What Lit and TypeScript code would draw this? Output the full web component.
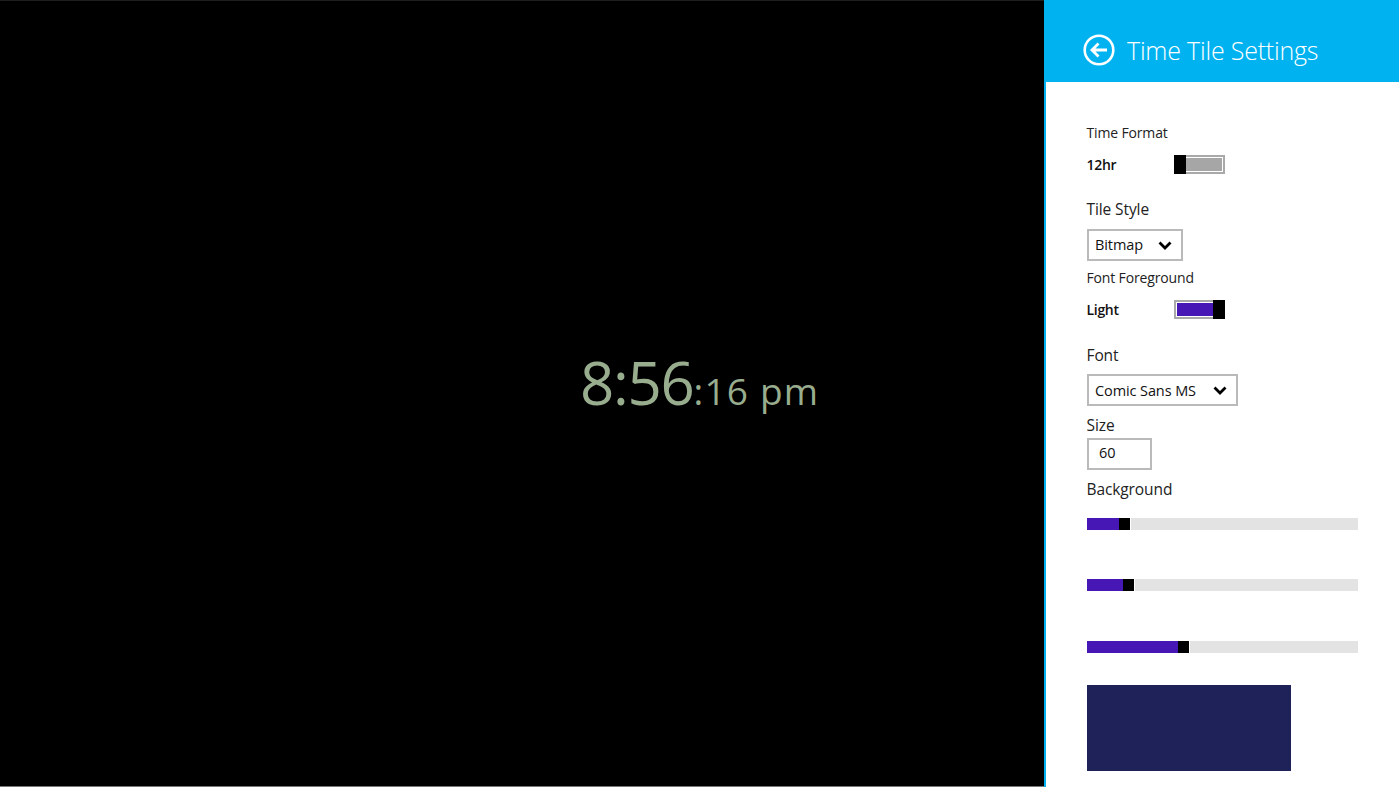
import { LitElement, html, css } from "lit";
import { customElement } from "lit/decorators.js";

const chevron = html`<svg class="chev" width="14" height="9" viewBox="0 0 14 9"><path d="M1.5 1.5 7 7l5.500-5.500" fill="none" stroke="#000" stroke-width="2.8"/></svg>`;

@customElement("app-root")
export class AppRoot extends LitElement {
  static styles = css`
    :host { display: flex; width: 1399px; height: 787px; overflow: hidden; background: #000; font-family: "Open Sans", "Noto Sans", sans-serif; color: #111; }
    .stage { width: 1044px; height: 787px; background: #000; color: #98ac8e; display: flex; align-items: baseline; padding: 339px 0 0 580px; box-sizing: border-box; border-top: 1px solid #1e1e1e; border-bottom: 1px solid #777; }
    .big { font-size: 60px; font-weight: 400; line-height: 84px; letter-spacing: -1.3px; }
    .small { font-size: 37px; font-weight: 400; letter-spacing: 1.2px; }
    .panel { width: 355px; height: 787px; background: #fff; border-left: 2px solid #00b3f0; box-sizing: border-box; display: flex; flex-direction: column; }
    .head { height: 82px; background: #00b3f0; color: #fff; display: flex; align-items: center; padding: 18px 0 0 37px; box-sizing: border-box; gap: 12px; flex: none; }
    .head svg { display: block; }
    .head h1 { margin: 0; font-size: 25px; font-weight: 300; letter-spacing: -0.2px; line-height: 34px; }
    .body { padding: 41px 0 0 41px; display: flex; flex-direction: column; align-items: flex-start; }
    .lbl { font-size: 14px; line-height: 20px; height: 20px; letter-spacing: -0.15px; color: #222; margin-left: -0.5px; }
    .lbl.b { font-size: 15.5px; letter-spacing: -0.1px; }
    .row { display: flex; align-items: center; height: 22px; width: 138px; justify-content: space-between; font-size: 14px; font-weight: 600; letter-spacing: -0.3px; color: #111; }
    .row span { margin-left: -0.5px; }
    .toggle { width: 51px; height: 19px; box-sizing: border-box; border: 2px solid #a9a9a9; display: flex; background: #fff; }
    .toggle .fill { flex: 1; margin: 1px; }
    .toggle .thumb { width: 12px; height: 19px; margin-top: -2px; background: #000; flex: none; }
    .toggle.off .thumb { margin-left: -2px; }
    .toggle.off .fill { background: #a6a6a6; margin-left: 0; }
    .toggle.on .thumb { margin-right: -2px; }
    .toggle.on .fill { background: #4617b4; margin-right: 0; }
    .box { height: 32px; border: 2px solid #bababa; box-sizing: border-box; display: flex; align-items: center; font-size: 14.5px; letter-spacing: -0.1px; color: #111; justify-content: space-between; }
    .chev { display: block; }
    .box span { padding-bottom: 1px; }
    .inp span { padding-bottom: 3px; }
    .s1 { width: 96px; padding: 0 9px 0 6px; }
    .s2 { width: 151px; padding: 0 9px 0 6px; }
    .s2 span { padding-bottom: 0; }
    .inp { width: 65px; padding-left: 10px; }
    .slider { width: 271px; height: 12px; background: #e3e3e3; display: flex; }
    .slider .v { background: #4617b4; height: 12px; }
    .slider .t { background: #000; width: 11px; height: 12px; border-right: 1px solid #fff; }
    .swatch { width: 204px; height: 86px; background: #1f2259; }
  `;

  private slider(v: number) {
    return html`<div class="slider"><div class="v" style="width:${v}px"></div><div class="t"></div></div>`;
  }

  render() {
    return html`
      <div class="stage"><span class="big">8:56</span><span class="small">:16 pm</span></div>
      <div class="panel">
        <div class="head">
          <svg width="32" height="32" viewBox="0 0 32 32" fill="none" stroke="#fff">
            <circle cx="16" cy="16" r="14.3" stroke-width="2.6"/>
            <path d="M24 16H9.500M15.500 9.500 9 16l6.500 6.500" stroke-width="2.800"/>
          </svg>
          <h1>Time Tile Settings</h1>
        </div>
        <div class="body">
          <div class="lbl">Time Format</div>
          <div class="row" style="margin-top:10px"><span>12hr</span><div class="toggle off"><div class="thumb"></div><div class="fill"></div></div></div>
          <div class="lbl b" style="margin-top:24px">Tile Style</div>
          <div class="box s1" style="margin-top:10px"><span>Bitmap</span>${chevron}</div>
          <div class="lbl" style="margin-top:7px">Font Foreground</div>
          <div class="row" style="margin-top:10px"><span>Light</span><div class="toggle on"><div class="fill"></div><div class="thumb"></div></div></div>
          <div class="lbl b" style="margin-top:25px">Font</div>
          <div class="box s2" style="margin-top:9px"><span>Comic Sans MS</span>${chevron}</div>
          <div class="lbl b" style="margin-top:9px">Size</div>
          <div class="box inp" style="margin-top:3px"><span>60</span></div>
          <div class="lbl b" style="margin-top:9px">Background</div>
          <div style="margin-top:19px">${this.slider(32)}</div>
          <div style="margin-top:49px">${this.slider(36)}</div>
          <div style="margin-top:50px">${this.slider(91)}</div>
          <div class="swatch" style="margin-top:32px"></div>
        </div>
      </div>
    `;
  }
}
